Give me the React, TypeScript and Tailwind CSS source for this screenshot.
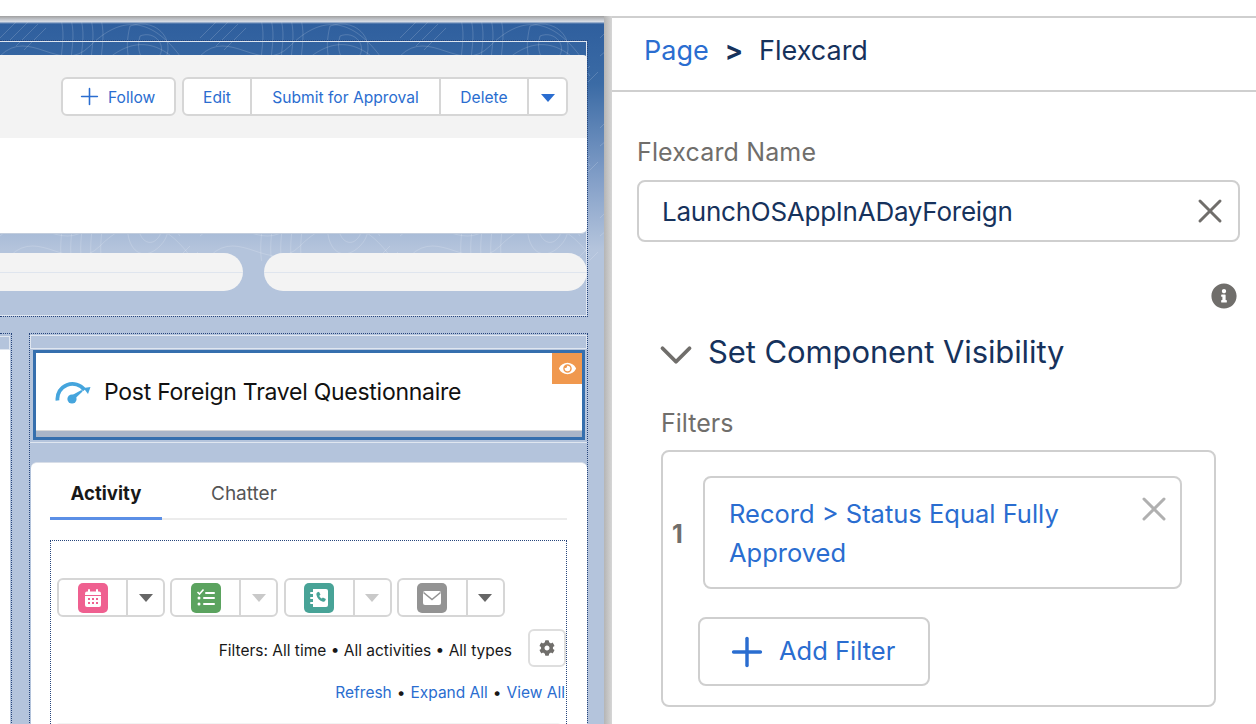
import { ChevronDown, Plus, X } from 'lucide-react'
import { FaCog, FaEye, FaInfoCircle } from 'react-icons/fa'

const topo = [
    'M0 40 C30 10 60 60 90 30 S150 0 180 40',
    'M10 60 C40 30 70 80 100 50 S160 20 190 60',
    'M0 22 L22 0 M8 26 L30 4 M16 30 L38 8 M24 34 L46 12',
    'M60 0 C70 30 50 50 70 90',
    'M70 0 C80 30 60 50 80 90',
    'M80 0 C90 30 70 50 90 90',
    'M90 0 C100 30 80 50 100 90',
    'M100 0 C110 30 90 50 110 90',
    'M130 10 C160 0 180 30 160 50 S120 50 130 10',
    'M140 20 C155 14 168 30 158 42 S134 40 140 20',
    'M170 70 L190 50 M178 76 L198 56 M10 85 L30 65 M20 90 L40 70',
]

function TopoPattern() {
    return (
        <svg className="absolute inset-0 w-full h-full" xmlns="http://www.w3.org/2000/svg">
            <defs>
                <pattern id="topo" width="200" height="90" patternUnits="userSpaceOnUse">
                    {topo.map((d) => (
                        <path key={d} d={d} fill="none" stroke="#ffffff" strokeOpacity="0.16" strokeWidth="1" />
                    ))}
                </pattern>
            </defs>
            <rect width="100%" height="100%" fill="url(#topo)" />
        </svg>
    )
}

function Caret({ className }: { className: string }) {
    return <div className={`w-0 h-0 border-x-[7px] border-x-transparent border-t-[8px] ${className}`}></div>
}

function CalendarIcon() {
    return (
        <svg viewBox="0 0 30 30" className="w-[30px] h-[30px]">
            <rect width="30" height="30" rx="5" fill="#ef6090" />
            <path d="M7 10.5a2 2 0 0 1 2-2h12a2 2 0 0 1 2 2v1.5H7z" fill="#fff" />
            <rect x="10" y="6" width="2" height="4" rx="1" fill="#fff" />
            <rect x="18" y="6" width="2" height="4" rx="1" fill="#fff" />
            <path d="M7 13h16v9a2 2 0 0 1-2 2H9a2 2 0 0 1-2-2z" fill="#fff" />
            <g fill="#ef6090">
                <rect x="10" y="15" width="2" height="2" />
                <rect x="14" y="15" width="2" height="2" />
                <rect x="18" y="15" width="2" height="2" />
                <rect x="10" y="19" width="2" height="2" />
                <rect x="14" y="19" width="2" height="2" />
                <rect x="18" y="19" width="2" height="2" />
            </g>
        </svg>
    )
}

function TaskIcon() {
    return (
        <svg viewBox="0 0 30 30" className="w-[30px] h-[30px]">
            <rect width="30" height="30" rx="5" fill="#5ba35f" />
            <path d="M6.500 9l2 2 4-4.500" fill="none" stroke="#fff" strokeWidth="1.600" />
            <g fill="#fff">
                <rect x="14" y="9" width="10" height="2" rx="1" />
                <rect x="12" y="14" width="12" height="2" rx="1" />
                <rect x="12" y="20" width="12" height="2" rx="1" />
                <circle cx="8" cy="15" r="1.500" />
                <circle cx="8" cy="21" r="1.500" />
            </g>
        </svg>
    )
}

function CallIcon() {
    return (
        <svg viewBox="0 0 30 30" className="w-[30px] h-[30px]">
            <rect width="30" height="30" rx="5" fill="#48a397" />
            <path d="M9 6h13a2 2 0 0 1 2 2v14a2 2 0 0 1-2 2H9z" fill="#fff" />
            <g fill="#fff">
                <rect x="6" y="9" width="4" height="2" rx="1" />
                <rect x="6" y="14" width="4" height="2" rx="1" />
                <rect x="6" y="19" width="4" height="2" rx="1" />
            </g>
            <path d="M13 9.500l2-.8 1.500 3-1.200 1c.5 1.300 1.300 2.200 2.500 2.800l1.100-1.100 3 1.600-.8 2c-.4.700-1.300.900-2.100.700-3.500-1-5.800-3.500-6.600-7-.1-.8.100-1.700.6-2.200z" fill="#48a397" />
        </svg>
    )
}

function EmailIcon() {
    return (
        <svg viewBox="0 0 30 30" className="w-[30px] h-[30px]">
            <rect width="30" height="30" rx="5" fill="#939393" />
            <path d="M6 10a2 2 0 0 1 2-2h14a2 2 0 0 1 2 2v10a2 2 0 0 1-2 2H8a2 2 0 0 1-2-2z" fill="#fff" />
            <path d="M6.500 9.500l8.500 7 8.500-7" fill="none" stroke="#939393" strokeWidth="1.600" />
        </svg>
    )
}

function GaugeIcon() {
    return (
        <svg viewBox="0 0 36 24" className="w-9 h-6 shrink-0">
            <path d="M2.500 20.500a15 15 0 0 1 27-10.500" fill="none" stroke="#45a5dd" strokeWidth="3.800" />
            <path d="M28.500 8l7-1-2.500 7z" fill="#45a5dd" />
            <circle cx="17" cy="19" r="4.600" fill="#45a5dd" />
            <path d="M15.500 16l11-6 1 1.500-9.500 9z" fill="#45a5dd" />
        </svg>
    )
}

function ActionSplit({ icon, caret }: { icon: React.ReactNode; caret: string }) {
    return (
        <div className="flex w-[108px] h-[39px] border-2 border-[#d6d6d6] rounded-md bg-white">
            <div className="w-[69px] flex items-center justify-center border-r-2 border-[#d6d6d6]">{icon}</div>
            <div className="flex-1 flex items-center justify-center">
                <Caret className={caret} />
            </div>
        </div>
    )
}

function LeftCanvas() {
    return (
        <div className="relative w-[604px] h-full overflow-hidden pr-[16px] pt-[24px] bg-[linear-gradient(180deg,#2f5f9e_8px,#3b6ba5_68px,#7f9cc6_158px,#b4c4dc_233px,#b4c4dc_100%)]">
            <div className="absolute top-0 left-0 w-full h-[245px]">
                <TopoPattern />
            </div>
            <div className="absolute top-0 left-0 w-full h-2 bg-[linear-gradient(180deg,#a0a0a0,#d8dde6_70%,transparent)]"></div>

            {/* header section */}
            <div className="relative h-[277px] border-y border-r border-dotted border-[#27457c]">
                <div className="h-full pt-[13px] pb-[2px] pr-[3px] border-y border-r border-[#dfe6f0]">
                    <div className="h-[83px] bg-[#f3f3f3] -mr-[4px] rounded-tr-sm flex items-start justify-end gap-[6px] pt-[22px] pr-[19px]">
                        <div className="w-[115px] h-[39px] border-2 border-[#d6d6d6] rounded-md bg-white flex items-center pl-[13px] gap-[5px] text-[15.600px] text-[#2a6dd0]">
                            <Plus size={27} strokeWidth={1.400} />
                            <span className="pt-[2px]">Follow</span>
                        </div>
                        <div className="h-[39px] border-2 border-[#d6d6d6] rounded-md bg-white flex text-[15.600px] text-[#2a6dd0]">
                            <div className="w-[68px] flex items-center justify-center pt-[2px] border-r-2 border-[#d6d6d6]">Edit</div>
                            <div className="w-[189px] flex items-center justify-center pt-[2px] border-r-2 border-[#d6d6d6]">Submit for Approval</div>
                            <div className="w-[88px] flex items-center justify-center pt-[2px] border-r-2 border-[#d6d6d6]">Delete</div>
                            <div className="w-[37px] flex items-center justify-center pt-[2px]">
                                <Caret className="border-t-[#2a6dd0]" />
                            </div>
                        </div>
                    </div>
                    <div className="h-[96px] bg-white -mr-[4px] rounded-br-md border-b border-[#c2cddd]"></div>
                    <div className="flex gap-[21px] pt-[19px] -mr-[4px]">
                        <div className="relative w-[243px] h-[38px] bg-[#f3f3f3] rounded-r-[19px] flex items-center shrink-0">
                            <div className="w-full h-px bg-[#dfe5ee]"></div>
                        </div>
                        <div className="flex-1 h-[38px] bg-[#f3f3f3] rounded-[19px] flex items-center">
                            <div className="w-full h-px bg-[#dfe5ee]"></div>
                        </div>
                    </div>
                </div>
            </div>

            {/* body columns */}
            <div className="relative flex gap-[17px] mt-[16px] h-[400px]">
                <div className="w-[12px] border-t border-r border-dotted border-[#27457c] pt-[2px] pr-[1px]">
                    <div className="h-[14px] border-y border-r border-[#dfe6f0]"></div>
                    <div className="h-full bg-white"></div>
                </div>
                <div className="flex-1 border-x border-t border-dotted border-[#27457c] pt-[1px]">
                    <div className="h-[14px] border border-[#dfe6f0]"></div>
                    <div className="relative h-[90px] ml-[3px] mr-[2px] mt-[1px] border-[3px] border-[#356fae] bg-white">
                        <div className="h-[78px] flex items-center pl-[19px] pt-[1px] gap-[13px] text-[23px] tracking-[-0.27px] text-[#111] border-b border-[#d9d9d9]">
                            <GaugeIcon />
                            Post Foreign Travel Questionnaire
                        </div>
                        <div className="h-[6px] bg-[#a9b5c8]"></div>
                        <div className="absolute top-0 right-0 w-[30px] h-[31px] bg-[#f0984e] flex items-center justify-center">
                            <FaEye size={17} className="text-white" />
                        </div>
                    </div>
                    <div className="h-[20px] mt-[2px] border-t border-[#dfe6f0]"></div>
                    <div className="ml-[1px] bg-white rounded-t-md h-[270px] border-t border-[#d8dee8] pl-[19px] pr-[20px] pt-[12px]">
                        <div className="flex h-[45px] border-b-2 border-[#ececec] text-[19px]">
                            <div className="w-[112px] h-[45px] border-b-[3px] border-[#5b8fe6] text-center font-bold text-[18.600px] text-[#181818] pt-[5px]">Activity</div>
                            <div className="pl-[49px] text-[#555] pt-[5px]">Chatter</div>
                        </div>
                        <div className="relative mt-[20px] h-[200px] border-x border-t border-dotted border-[#27457c] pt-[37px]">
                            <div className="flex gap-[5.300px] pl-[6px]">
                                <ActionSplit icon={<CalendarIcon />} caret="border-t-[#666]" />
                                <ActionSplit icon={<TaskIcon />} caret="border-t-[#c9c9c9]" />
                                <ActionSplit icon={<CallIcon />} caret="border-t-[#c9c9c9]" />
                                <ActionSplit icon={<EmailIcon />} caret="border-t-[#666]" />
                            </div>
                            <div className="flex justify-end items-center gap-[16px] mt-[12px] text-[15.500px] text-[#181818]">
                                <div className="pt-[6px]">Filters: All time • All activities • All types</div>
                                <div className="w-[38px] h-[38px] border-2 border-[#dedede] rounded-md flex items-center justify-center">
                                    <FaCog size={16} className="text-[#706e6b]" />
                                </div>
                            </div>
                            <div className="flex justify-end gap-[5px] mt-[14px] pr-[1px] text-[15.500px] text-[#2a6dd0]">
                                <span>Refresh</span>
                                <span className="text-[#181818]">•</span>
                                <span>Expand All</span>
                                <span className="text-[#181818]">•</span>
                                <span>View All</span>
                            </div>
                            <div className="h-2 mx-[3px] mt-[19px] bg-[#f3f3f3] rounded-t-md"></div>
                        </div>
                    </div>
                </div>
            </div>
        </div>
    )
}

function RightPanel() {
    return (
        <div className="flex-1 border-t-2 border-[#cfcfcf] bg-white">
            <div className="h-[74px] border-b-2 border-[#cfcfcf] flex items-center pl-[32px] pb-[6px] text-[27px]">
                <span className="text-[#2a6dd0]">Page</span>
                <span className="ml-[16px] font-bold text-[#16325c]">&gt;</span>
                <span className="ml-[16px] text-[#16325c]">Flexcard</span>
            </div>
            <div className="pl-[25px] pr-[16px] pt-[43px]">
                <div className="text-[25px] tracking-[0.15px] leading-[34px] text-[#706e6b]">Flexcard Name</div>
                <div className="mt-[11px] h-[62px] border-2 border-[#cfcfcf] rounded-lg flex items-center justify-between pl-[23px] pr-[8px] text-[26px] tracking-[-0.25px] text-[#16325c]">
                    LaunchOSAppInADayForeign
                    <X size={40} strokeWidth={1.800} className="text-[#706e6b]" />
                </div>
                <div className="flex justify-end pt-[41px] pr-[3px]">
                    <FaInfoCircle size={26} className="text-[#706e6b]" />
                </div>
                <div className="flex items-center ml-[24px] mt-[23px] gap-[5px] text-[31px] tracking-[-0.1px] leading-[40px] text-[#16325c]">
                    <ChevronDown size={54} strokeWidth={1.700} className="text-[#706e6b] -mt-[4px] -mb-[10px] -ml-[12px]" />
                    Set Component Visibility
                </div>
                <div className="ml-[24px] mt-[34px] text-[25px] leading-[34px] text-[#706e6b]">Filters</div>
                <div className="ml-[24px] mr-[24px] mt-[10px] h-[257px] border-2 border-[#cfcfcf] rounded-lg pt-[24px]">
                    <div className="flex items-center">
                        <div className="w-[40px] pl-[9px] pt-[4px] text-[25px] font-bold text-[#706e6b]">1</div>
                        <div className="relative w-[479px] h-[113px] border-2 border-[#cfcfcf] rounded-lg pl-[24px] pt-[16px] text-[25.500px] leading-[39px] text-[#2a6dd0]">
                            Record &gt; Status Equal Fully
                            <br />
                            Approved
                            <X size={40} strokeWidth={1.800} className="absolute top-[11px] right-[6px] text-[#b0b0b0]" />
                        </div>
                    </div>
                    <div className="ml-[35px] mt-[28px] w-[232px] h-[69px] border-2 border-[#cfcfcf] rounded-lg flex items-center pl-[24px] gap-[9px] text-[25.500px] text-[#2a6dd0]">
                        <Plus size={46} strokeWidth={1.800} />
                        Add Filter
                    </div>
                </div>
            </div>
        </div>
    )
}

export default function App() {
    return (
        <div className="w-[1256px] h-[724px] overflow-hidden bg-white flex flex-col font-['Inter',sans-serif]">
            <div className="h-4 shrink-0 bg-white"></div>
            <div className="flex h-[708px]">
                <LeftCanvas />
                <div className="w-[8px] h-full bg-[linear-gradient(90deg,#b5b5b5,#d6d6d6)]"></div>
                <RightPanel />
            </div>
        </div>
    )
}
